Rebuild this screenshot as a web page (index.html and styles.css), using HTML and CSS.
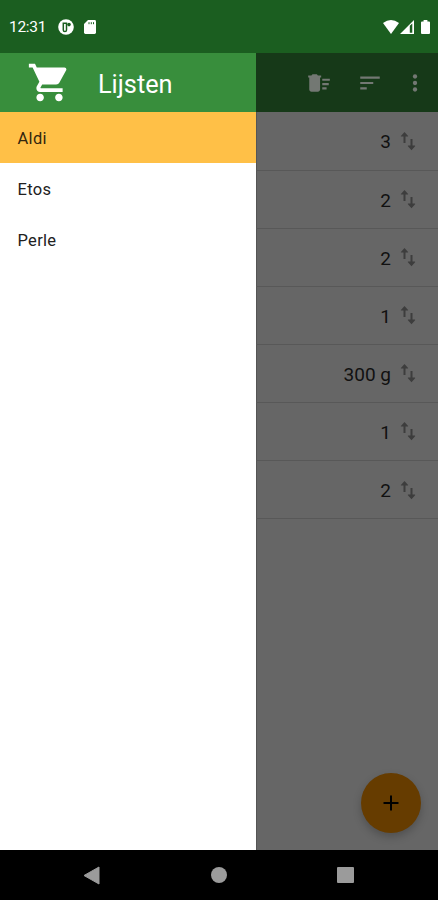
FILE: index.html
```html
<!DOCTYPE html>
<html lang="nl">
<head>
<meta charset="utf-8">
<title>Lijsten</title>
<link rel="stylesheet" href="styles.css">
</head>
<body>
<svg class="defs" aria-hidden="true">
  <symbol id="swap" viewBox="0 0 24 24"><path d="M8.500 3 4.900 7v.6H7.500V14h2V7.600h2.600V7zM15.500 21.200l3.600-4v-.6h-2.600V10h-2v6.600h-2.600v.6z"/></symbol>
</svg>
<div class="phone">
  <header class="status">
    <span class="clock">12:31</span>
    <svg class="app-badge" viewBox="0 0 16 16"><circle cx="8" cy="8" r="7.8" fill="#fff"/><path d="M5.300 4.300v6.700a1.600 1.600 0 0 0 3.200 0V4.300z" fill="none" stroke="#1b5e20" stroke-width="1.500"/><circle cx="11" cy="5.600" r="1.800" fill="#1b5e20"/></svg>
    <svg class="sd" viewBox="0 0 12 14"><path fill="#fff" d="M4 0h6.600Q12 0 12 1.400v11.200Q12 14 10.600 14H1.400Q0 14 0 12.600V4z"/><path d="M5 2.200v2M7.300 2.200v2M9.500 2.200v2" stroke="#1b5e20" stroke-width="1"/></svg>
    <div class="signals">
      <svg width="16" height="14" viewBox="0 0 16 14"><path fill="#fff" d="M0 3Q8-3 16 3L8 14z"/></svg>
      <svg width="14" height="14" viewBox="0 0 14 14"><path fill="#fff" fill-rule="evenodd" d="M0 14 14 0v14zM9.800 5.800v6.900h2.500V3.400z"/></svg>
      <svg class="battery" width="9" height="14" viewBox="0 0 9 14"><path fill="#fff" d="M2.600 0h3.800v1.400H8q1 0 1 1V13q0 1-1 1H1q-1 0-1-1V2.400q0-1 1-1h1.600z"/></svg>
    </div>
  </header>
  <div class="screen">
    <nav class="drawer">
      <div class="drawer-head">
        <svg class="cart" viewBox="0 0 24 24"><path fill="#fff" d="M7 18c-1.100 0-1.990.9-1.990 2S5.900 22 7 22s2-.9 2-2-.9-2-2-2zM1 2v2h2l3.600 7.590-1.350 2.450c-.16.28-.25.61-.25.96 0 1.100.9 2 2 2h12v-2H7.420c-.14 0-.25-.11-.25-.25l.03-.12.9-1.630h7.450c.75 0 1.410-.41 1.750-1.030l3.580-6.490c.08-.14.12-.31.12-.48 0-.55-.45-1-1-1H5.210l-.94-2H1zm16 16c-1.100 0-1.990.9-1.990 2s.89 2 1.990 2 2-.9 2-2-.9-2-2-2z"/></svg>
        <h1>Lijsten</h1>
      </div>
      <div class="list-name selected">Aldi</div>
      <div class="list-name">Etos</div>
      <div class="list-name">Perle</div>
    </nav>
    <main class="content">
      <div class="toolbar">
        <svg class="tool sweep" viewBox="0 0 24 24"><path d="M15 16h4v2h-4zm0-8h7v2h-7zm0 4h6v2h-6zM3 18c0 1.100.9 2 2 2h6c1.100 0 2-.9 2-2V7H3v11zM14 5h-3l-1-1H6L5 5H2v2h12z"/></svg>
        <svg class="tool sort" viewBox="0 0 24 24"><path d="M3 18h6v-2H3v2zM3 6v2h18V6H3zm0 7h12v-2H3v2z"/></svg>
        <svg class="tool" viewBox="0 0 24 24"><circle cx="12" cy="6" r="2"/><circle cx="12" cy="12" r="2"/><circle cx="12" cy="18" r="2"/></svg>
      </div>
      <div class="row"><span>3</span><svg><use href="#swap"/></svg></div>
      <div class="row"><span>2</span><svg><use href="#swap"/></svg></div>
      <div class="row"><span>2</span><svg><use href="#swap"/></svg></div>
      <div class="row"><span>1</span><svg><use href="#swap"/></svg></div>
      <div class="row"><span>300 g</span><svg><use href="#swap"/></svg></div>
      <div class="row"><span>1</span><svg><use href="#swap"/></svg></div>
      <div class="row"><span>2</span><svg><use href="#swap"/></svg></div>
      <div class="fab"><svg width="16" height="16" viewBox="0 0 16 16"><path d="M8 .5v15M.5 8h15" stroke="#000" stroke-width="2"/></svg></div>
    </main>
  </div>
  <footer class="sysnav">
    <svg width="17" height="19" viewBox="0 0 17 19"><path fill="#9b9b9b" d="M16 1v17L1 9.500z" stroke="#9b9b9b" stroke-linejoin="round"/></svg>
    <span class="home"></span>
    <span class="recent"></span>
  </footer>
</div>
</body>
</html>
```
FILE: styles.css
```css
* { box-sizing: border-box; }

body {
  margin: 0;
  font-family: Roboto, sans-serif;
  overflow: hidden;
}

svg { display: block; flex: none; }

.defs { display: none; }

.phone {
  width: 438px;
  height: 900px;
  display: flex;
  flex-direction: column;
}

.status {
  height: 53px;
  flex: none;
  display: flex;
  align-items: center;
  padding: 1px 8px 0 9px;
  background: #1b5e20;
  color: #fff;
}

.clock { width: 49px; font-size: 15.500px; letter-spacing: -0.3px; }
.app-badge { width: 16px; height: 16px; }
.sd { width: 12px; height: 14px; margin-left: 10px; }
.signals { display: flex; margin-left: auto; gap: 1px; }
.battery { margin-left: 6px; }

.screen { flex: 1; display: flex; min-height: 0; }

.drawer { width: 256px; flex: none; background: #fff; }

.drawer-head {
  height: 59px;
  display: flex;
  align-items: center;
  padding-left: 27px;
  background: #388e3c;
  color: #fff;
}

.cart { width: 45px; height: 45px; }

h1 {
  margin: 4px 0 0 26px;
  font-size: 25.300px;
  line-height: 30px;
  font-weight: 400;
}

.list-name {
  height: 51px;
  padding-left: 17.500px;
  line-height: 54px;
  font-size: 16.500px;
  letter-spacing: 0.3px;
  color: #212121;
}

.selected { background: #ffc047; color: #33260e; }

.content {
  flex: 1;
  position: relative;
  background: #666;
  box-shadow: inset 1px 0 #555;
}

.toolbar {
  height: 59px;
  display: flex;
  align-items: center;
  justify-content: flex-end;
  padding-right: 10px;
  background: #163918;
}

.tool { width: 26px; height: 26px; fill: #737873; }
.sweep { margin-right: 25px; }
.sort { margin-right: 19px; }

.row {
  height: 58.100px;
  display: flex;
  align-items: center;
  justify-content: flex-end;
  padding-right: 18px;
  border-bottom: 1px solid #585858;
  font-size: 19px;
  color: #111;
}

.row:nth-of-type(2) { height: 58.500px; }

.row span { margin-top: 2px; }
.row svg { width: 24px; height: 24px; margin-left: 5px; fill: #3d3d3d; }

.fab {
  position: absolute;
  right: 17px;
  bottom: 17px;
  width: 60px;
  height: 60px;
  display: flex;
  align-items: center;
  justify-content: center;
  border-radius: 50%;
  background: #663c00;
  box-shadow: 0 4px 8px rgba(0, 0, 0, 0.22);
}

.sysnav {
  height: 50px;
  flex: none;
  display: flex;
  align-items: center;
  justify-content: space-between;
  padding: 0 84px 0 83px;
  background: #000;
}

.home { width: 16px; height: 16px; border-radius: 50%; background: #9b9b9b; }
.recent { width: 17px; height: 16px; border-radius: 1px; background: #9b9b9b; }
```
